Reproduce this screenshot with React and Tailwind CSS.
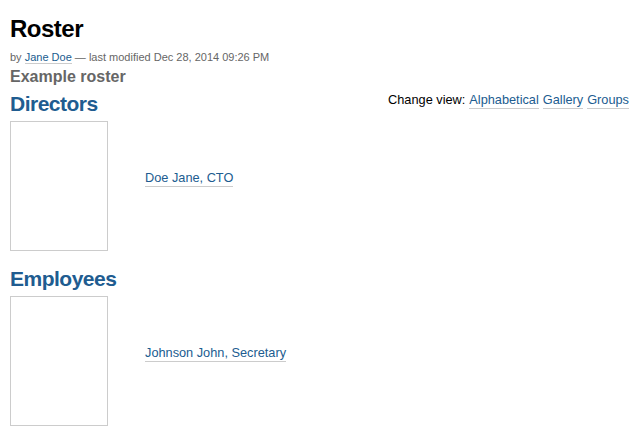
const groups = [
  { title: 'Directors', people: [{ name: 'Doe Jane, CTO' }] },
  { title: 'Employees', people: [{ name: 'Johnson John, Secretary' }] },
]

const views = ['Alphabetical', 'Gallery', 'Groups']

function Person({ person }) {
  return (
    <div className="flex items-start gap-[37px]">
      <div className="w-[98px] h-[130px] border border-[#cccccc] bg-white shrink-0" />
      <a href="#" className="mt-[49px] text-[12.75px] leading-4 text-[#205c90] border-b border-[#cccccc] no-underline">
        {person.name}
      </a>
    </div>
  )
}

export default function App() {
  return (
    <div className="min-h-[434px] bg-white px-[10px] pt-[15px] text-black" style={{ fontFamily: '"Liberation Sans", Arial, sans-serif' }}>
      <h1 className="text-[24px] leading-[28px] font-bold tracking-[-0.5px]">Roster</h1>

      <div className="mt-[7px] text-[11px] leading-[14px] text-[#666666]">
        by <a href="#" className="text-[#205c90] border-b border-[#cccccc]">Jane Doe</a> — last modified Dec 28, 2014 09:26 PM
      </div>

      <p className="mt-1 text-[16px] leading-[18px] font-bold text-[#666666]">Example roster</p>

      {groups.map((g, i) => (
        <div key={g.title} className={i === 0 ? 'mt-[6px]' : 'mt-4'}>
          <div className="flex items-start justify-between">
            <h2 className="text-[21px] leading-6 font-bold tracking-[-0.5px] text-[#205c90]">{g.title}</h2>
            {i === 0 && (
              <div className="text-[12.75px] leading-4 flex gap-[4px]">
                <span>Change view:</span>
                {views.map(v => (
                  <a key={v} href="#" className="text-[#205c90] border-b border-[#cccccc]">{v}</a>
                ))}
              </div>
            )}
          </div>
          <div className="mt-[5px] flex flex-col gap-4">
            {g.people.map(p => <Person key={p.name} person={p} />)}
          </div>
        </div>
      ))}
    </div>
  )
}
